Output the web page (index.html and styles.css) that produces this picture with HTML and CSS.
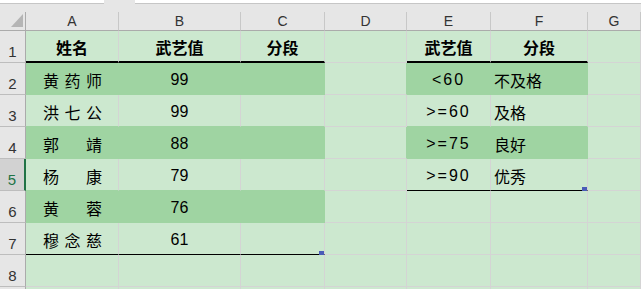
FILE: index.html
```html
<!DOCTYPE html>
<html lang="zh-CN">
<head>
  <meta charset="UTF-8">
  <title>武艺值分段</title>
  <link rel="stylesheet" href="styles.css">
</head>
<body>

<div class="formula-bar">
  <div class="name-box"></div>
  <div class="gap"></div>
  <div class="formula"></div>
</div>
<div class="spacer"></div>

<div class="sheet">
  <!-- column headers -->
  <div class="corner">
    <svg width="26" height="19" viewBox="0 0 26 19"><polygon points="23,2 23,15 11,15" fill="#b5b5b5"/></svg>
  </div>
  <div class="col-head">A</div>
  <div class="col-head">B</div>
  <div class="col-head">C</div>
  <div class="col-head">D</div>
  <div class="col-head">E</div>
  <div class="col-head">F</div>
  <div class="col-head">G</div>

  <!-- row 1 -->
  <div class="row-head">1</div>
  <div class="cell bold center rule">姓名</div>
  <div class="cell bold center rule">武艺值</div>
  <div class="cell bold center rule">分段</div>
  <div class="cell"></div>
  <div class="cell bold center rule">武艺值</div>
  <div class="cell bold center rule">分段</div>
  <div class="cell"></div>

  <!-- row 2 -->
  <div class="row-head">2</div>
  <div class="cell fill dist"><span>黄</span><span>药</span><span>师</span></div>
  <div class="cell fill center">99</div>
  <div class="cell fill"></div>
  <div class="cell before"></div>
  <div class="cell fill center spaced">&lt;60</div>
  <div class="cell fill left">不及格</div>
  <div class="cell"></div>

  <!-- row 3 -->
  <div class="row-head">3</div>
  <div class="cell above dist"><span>洪</span><span>七</span><span>公</span></div>
  <div class="cell above center">99</div>
  <div class="cell above"></div>
  <div class="cell"></div>
  <div class="cell above center spaced">&gt;=60</div>
  <div class="cell above left">及格</div>
  <div class="cell"></div>

  <!-- row 4 -->
  <div class="row-head">4</div>
  <div class="cell fill dist"><span>郭</span><span>靖</span></div>
  <div class="cell fill center">88</div>
  <div class="cell fill"></div>
  <div class="cell before"></div>
  <div class="cell fill center spaced">&gt;=75</div>
  <div class="cell fill left">良好</div>
  <div class="cell"></div>

  <!-- row 5 -->
  <div class="row-head selected">5</div>
  <div class="cell above dist"><span>杨</span><span>康</span></div>
  <div class="cell above center">79</div>
  <div class="cell above"></div>
  <div class="cell"></div>
  <div class="cell end center spaced">&gt;=90</div>
  <div class="cell end left">优秀<i class="handle"></i></div>
  <div class="cell"></div>

  <!-- row 6 -->
  <div class="row-head">6</div>
  <div class="cell fill dist"><span>黄</span><span>蓉</span></div>
  <div class="cell fill center">76</div>
  <div class="cell fill"></div>
  <div class="cell"></div>
  <div class="cell"></div>
  <div class="cell"></div>
  <div class="cell"></div>

  <!-- row 7 -->
  <div class="row-head">7</div>
  <div class="cell end dist"><span>穆</span><span>念</span><span>慈</span></div>
  <div class="cell end center">61</div>
  <div class="cell end"><i class="handle"></i></div>
  <div class="cell"></div>
  <div class="cell"></div>
  <div class="cell"></div>
  <div class="cell"></div>

  <!-- row 8 -->
  <div class="row-head">8</div>
  <div class="cell"></div>
  <div class="cell"></div>
  <div class="cell"></div>
  <div class="cell"></div>
  <div class="cell"></div>
  <div class="cell"></div>
  <div class="cell"></div>

  <!-- row 9, only its top edge shows -->
  <div class="row-head"></div>
  <div class="cell"></div>
  <div class="cell"></div>
  <div class="cell"></div>
  <div class="cell"></div>
  <div class="cell"></div>
  <div class="cell"></div>
  <div class="cell"></div>
</div>

</body>
</html>
```

FILE: styles.css
```css
html, body {
  margin: 0;
  height: 100%;
  overflow: hidden;
  background-color: #e6e6e6;
  font-family: 'Liberation Sans', 'Noto Sans CJK SC', sans-serif;
}

/* strip of the formula bar above the grid */
.formula-bar {
  display: flex;
  height: 4px;
}

.name-box,
.formula {
  background-color: #fff;
  border-bottom: 1px solid #c6c6c6;
  box-sizing: border-box;
}

.name-box {
  width: 104px;
}

.gap {
  width: 31px;
}

.formula {
  flex: 1;
}

.spacer {
  height: 8px;
}

.sheet {
  display: grid;
  grid-template-columns: 26px 93px 122px 84px 82px 84px 97px 1fr;
  grid-template-rows: 19px;
  grid-auto-rows: 32px;
}

.sheet > div {
  box-sizing: border-box;
}

/* headers */
.corner {
  border-right: 1px solid #ababab;
  border-bottom: 1px solid #ababab;
}

.corner svg {
  display: block;
}

.col-head {
  display: flex;
  align-items: center;
  justify-content: center;
  font-size: 14px;
  color: #333;
  border-right: 1px solid #c8c8c8;
  border-bottom: 1px solid #ababab;
}

.row-head {
  display: flex;
  align-items: flex-end;
  justify-content: center;
  padding-bottom: 2px;
  font-size: 15px;
  color: #333;
  border-right: 1px solid #ababab;
  border-bottom: 1px solid #bdbdbd;
}

.row-head.selected {
  background-color: #d2d2d2;
  color: #217346;
  border-right: 2px solid #217346;
}

/* cells */
.cell {
  position: relative;
  display: flex;
  align-items: center;
  padding-top: 2px;
  font-size: 16px;
  color: #000;
  background-color: #cce8cf;
  border-right: 1px solid #d4d4d4;
  border-bottom: 1px solid #d4d4d4;
}

.cell.fill {
  background-color: #9fd4a2;
  border-color: #9fd4a2;
}

.cell.above {
  border-bottom-color: #9fd4a2;
}

.cell.before {
  border-right-color: #9fd4a2;
}

.cell.rule {
  border-bottom: 2px solid #000;
}

.cell.end {
  border-bottom-color: #000;
}

.bold {
  font-weight: bold;
}

.center {
  justify-content: center;
}

.left {
  padding-left: 3px;
}

.spaced {
  letter-spacing: 2px;
}

.dist {
  justify-content: space-between;
  padding: 2px 16px 0 17px;
}

/* fill handle at the corner of a selection */
.handle {
  position: absolute;
  right: 0;
  bottom: -1px;
  width: 5px;
  height: 4px;
  background-color: #4a5bb8;
}
```
